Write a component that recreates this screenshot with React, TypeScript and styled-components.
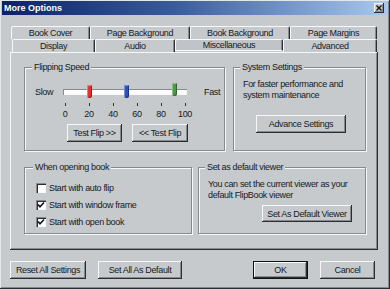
import React from 'react'
import styled, { createGlobalStyle, css } from 'styled-components'

const FACE = '#c6cacd'
const LIGHT = '#f6f8fa'
const SHADOW = '#858a8e'
const DARK = '#2a2e32'
const TEXT = '#15191d'

const GlobalStyle = createGlobalStyle`
  html, body {
    margin: 0;
    padding: 0;
    background: ${FACE};
  }
  body {
    font-family: 'Liberation Sans', Arial, sans-serif;
  }
`

const raised = css`
  box-shadow: inset -1px -1px ${DARK}, inset 1px 1px ${LIGHT}, inset -2px -2px ${SHADOW};
`

const Window = styled.div`
  width: 390px;
  height: 289px;
  box-sizing: border-box;
  background: ${FACE};
  box-shadow: inset -1px -1px ${DARK}, inset 1px 1px #e4e7ea, inset -2px -2px ${SHADOW};
  display: flex;
  flex-direction: column;
  font-size: 9px;
  letter-spacing: -0.35px;
  color: ${TEXT};
  overflow: hidden;
`

const TitleBar = styled.div`
  height: 14px;
  margin: 1px 2px 0 2px;
  padding: 0 4px 0 2px;
  background: linear-gradient(to right, #0a2266 0%, #3a5c9c 45%, #a9c9ee 100%);
  display: flex;
  align-items: center;
  justify-content: space-between;
`

const Title = styled.span`
  color: #fff;
  font-weight: bold;
  font-size: 9px;
  letter-spacing: 0;
`

const CloseButton = styled.div`
  width: 10px;
  height: 10px;
  background: ${FACE};
  ${raised};
  display: flex;
  align-items: center;
  justify-content: center;
`

const Content = styled.div`
  padding: 11px 12px 0 10px;
  display: flex;
  flex-direction: column;
`

const TabRow = styled.div<{ $offset: number }>`
  display: flex;
  height: 13px;
  margin-left: ${({ $offset }) => $offset}px;
`

const Tab = styled.div<{ $width: number; $active?: boolean }>`
  width: ${({ $width }) => $width}px;
  box-sizing: border-box;
  display: flex;
  align-items: center;
  justify-content: center;
  border-top: 1px solid ${LIGHT};
  border-left: 1px solid ${LIGHT};
  border-right: 1px solid ${DARK};
  border-radius: 2px 2px 0 0;
  box-shadow: inset -1px 0 ${SHADOW};
  ${({ $active }) =>
    $active &&
    css`
      background: #c0c4c8;
      border-bottom: 1px solid ${LIGHT};
      height: 12px;
    `}
`

const Panel = styled.div`
  height: 198px;
  box-sizing: border-box;
  padding: 15px 12px 0 14px;
  ${raised};
  display: flex;
  flex-direction: column;
  gap: 16px;
`

const GroupRow = styled.div<{ $gap: number }>`
  display: flex;
  gap: ${({ $gap }) => $gap}px;
`

const Group = styled.section<{ $width: number; $height: number; $pad: number }>`
  width: ${({ $width }) => $width}px;
  height: ${({ $height }) => $height}px;
  box-sizing: border-box;
  border: 1px solid ${SHADOW};
  box-shadow: inset 1px 1px ${LIGHT}, 1px 1px ${LIGHT};
  padding: 0 ${({ $pad }) => $pad}px;
  display: flex;
  flex-direction: column;
`

const GroupLabel = styled.div`
  align-self: flex-start;
  margin: -6px 0 0 -3px;
  padding: 0 2px;
  line-height: 11px;
  background: ${FACE};
`

const Paragraph = styled.div<{ $top: number }>`
  margin-top: ${({ $top }) => $top}px;
  line-height: 11px;
`

const ButtonSlot = styled.div<{ $top: number; $right?: boolean }>`
  margin-top: ${({ $top }) => $top}px;
  display: flex;
  justify-content: ${({ $right }) => ($right ? 'flex-end' : 'flex-start')};
  padding: ${({ $right }) => ($right ? '0 4px 0 0' : '0 0 0 13px')};
`

const Button = styled.button<{ $width: number; $height?: number; $default?: boolean }>`
  width: ${({ $width }) => $width}px;
  height: ${({ $height }) => $height ?? 18}px;
  padding: 0;
  border: none;
  background: ${FACE};
  font-family: inherit;
  font-size: 9px;
  letter-spacing: -0.35px;
  color: ${TEXT};
  white-space: nowrap;
  overflow: hidden;
  ${({ $default }) =>
    $default
      ? css`
          box-shadow: inset 0 0 0 1px #111, inset -2px -2px ${DARK}, inset 2px 2px ${LIGHT},
            inset -3px -3px ${SHADOW};
        `
      : raised};
`

/* slider */

const SliderGrid = styled.div`
  margin-top: 11px;
  display: grid;
  grid-template-columns: 28px 124px auto;
  grid-template-rows: 16px auto auto;
  align-items: center;
`

const EndLabel = styled.span<{ $after?: boolean }>`
  padding-left: ${({ $after }) => ($after ? 17 : 0)}px;
`

const Track = styled.div`
  position: relative;
  height: 6px;
  background: #fdfdfd;
  box-shadow: inset 1px 1px ${SHADOW}, inset -1px -1px ${LIGHT};
`

const Thumb = styled.div<{ $color: string; $lift: number }>`
  position: absolute;
  top: ${({ $lift }) => -4 - $lift}px;
  width: 5px;
  height: 13px;
  margin-left: -2px;
  box-sizing: border-box;
  background: ${({ $color }) => $color};
  border-radius: 1px 1px 3px 3px;
  box-shadow: inset -1px -1px rgba(0, 0, 0, 0.35), inset 1px 1px rgba(255, 255, 255, 0.35);
`

const Scale = styled.div`
  grid-column: 2;
  display: flex;
  justify-content: space-between;
  margin: 0 -6px;
`

const ScaleStop = styled.div`
  width: 16px;
  display: flex;
  flex-direction: column;
  align-items: center;
`

const Tick = styled.div`
  width: 1px;
  height: 3px;
  margin-top: 3px;
  background: ${DARK};
`

const ScaleLabel = styled.div`
  margin-top: 3px;
  line-height: 10px;
`

const TestButtons = styled.div`
  grid-column: 2 / span 2;
  margin: 5px 0 0 4px;
  display: flex;
  gap: 10px;
`

/* checkboxes */

const CheckList = styled.div`
  margin-top: 6px;
  display: flex;
  flex-direction: column;
`

const CheckRow = styled.label`
  height: 17px;
  display: flex;
  align-items: center;
  gap: 3px;
`

const Box = styled.span`
  width: 10px;
  height: 10px;
  box-sizing: border-box;
  background: #fff;
  box-shadow: inset 1px 1px ${SHADOW}, inset 2px 2px ${DARK}, inset -1px -1px ${LIGHT};
  display: flex;
  align-items: center;
  justify-content: center;
`

const Footer = styled.div`
  margin: 11px 3px 0 0;
  display: flex;
  gap: 12px;
`

const Spacer = styled.div`
  flex: 1;
`

const backTabs = [
  { label: 'Book Cover', width: 79 },
  { label: 'Page Background', width: 100 },
  { label: 'Book Background', width: 100 },
  { label: 'Page Margins', width: 87 },
]

const frontTabs = [
  { label: 'Display', width: 83 },
  { label: 'Audio', width: 80 },
  { label: 'Miscellaneous', width: 108, active: true },
  { label: 'Advanced', width: 94 },
]

const thumbs = [
  { value: 20, color: '#e8302a', lift: 0 },
  { value: 50, color: '#2f4fc0', lift: 0 },
  { value: 90, color: '#4b9a4c', lift: 2 },
]

const stops = [0, 20, 40, 60, 80, 100]

const checks = [
  { label: 'Start with auto flip', checked: false },
  { label: 'Start with window frame', checked: true },
  { label: 'Start with open book', checked: true },
]

const CheckMark = () => (
  <svg width="8" height="8" viewBox="0 0 8 8">
    <path d="M1 3.5 L3 5.8 L7 1.5" fill="none" stroke="#111" strokeWidth="1.6" />
  </svg>
)

const CloseIcon = () => (
  <svg width="6" height="6" viewBox="0 0 6 6">
    <path d="M0.5 0.5 L5.5 5.5 M5.5 0.5 L0.5 5.5" stroke="#111" strokeWidth="1.4" />
  </svg>
)

export default function App() {
  return (
    <>
      <GlobalStyle />
      <Window>
        <TitleBar>
          <Title>More Options</Title>
          <CloseButton>
            <CloseIcon />
          </CloseButton>
        </TitleBar>
        <Content>
          <TabRow $offset={1}>
            {backTabs.map((t) => (
              <Tab key={t.label} $width={t.width}>
                {t.label}
              </Tab>
            ))}
          </TabRow>
          <TabRow $offset={2}>
            {frontTabs.map((t) => (
              <Tab key={t.label} $width={t.width} $active={t.active}>
                {t.label}
              </Tab>
            ))}
          </TabRow>
          <Panel>
            <GroupRow $gap={8}>
              <Group $width={201} $height={84} $pad={10}>
                <GroupLabel>Flipping Speed</GroupLabel>
                <SliderGrid>
                  <EndLabel>Slow</EndLabel>
                  <Track>
                    {thumbs.map((t) => (
                      <Thumb
                        key={t.color}
                        $color={t.color}
                        $lift={t.lift}
                        style={{ left: 2 + (t.value / 100) * 121 }}
                      />
                    ))}
                  </Track>
                  <EndLabel $after>Fast</EndLabel>
                  <Scale>
                    {stops.map((s) => (
                      <ScaleStop key={s}>
                        <Tick />
                        <ScaleLabel>{s}</ScaleLabel>
                      </ScaleStop>
                    ))}
                  </Scale>
                  <TestButtons>
                    <Button $width={55}>Test Flip &gt;&gt;</Button>
                    <Button $width={56}>&lt;&lt; Test Flip</Button>
                  </TestButtons>
                </SliderGrid>
              </Group>
              <Group $width={133} $height={84} $pad={9}>
                <GroupLabel>System Settings</GroupLabel>
                <Paragraph $top={6}>
                  For faster performance and
                  <br />
                  system maintenance
                </Paragraph>
                <ButtonSlot $top={14}>
                  <Button $width={90}>Advance Settings</Button>
                </ButtonSlot>
              </Group>
            </GroupRow>
            <GroupRow $gap={6}>
              <Group $width={168} $height={67} $pad={11}>
                <GroupLabel>When opening book</GroupLabel>
                <CheckList>
                  {checks.map((c) => (
                    <CheckRow key={c.label}>
                      <Box>{c.checked && <CheckMark />}</Box>
                      {c.label}
                    </CheckRow>
                  ))}
                </CheckList>
              </Group>
              <Group $width={168} $height={67} $pad={9}>
                <GroupLabel>Set as default viewer</GroupLabel>
                <Paragraph $top={6}>
                  You can set the current viewer as your
                  <br />
                  default FlipBook viewer
                </Paragraph>
                <ButtonSlot $top={4} $right>
                  <Button $width={90} $height={17}>
                    Set As Default Viewer
                  </Button>
                </ButtonSlot>
              </Group>
            </GroupRow>
          </Panel>
          <Footer>
            <Button $width={76}>Reset All Settings</Button>
            <Button $width={84}>Set All As Default</Button>
            <Spacer />
            <Button $width={55} $default>
              OK
            </Button>
            <Button $width={55}>Cancel</Button>
          </Footer>
        </Content>
      </Window>
    </>
  )
}
